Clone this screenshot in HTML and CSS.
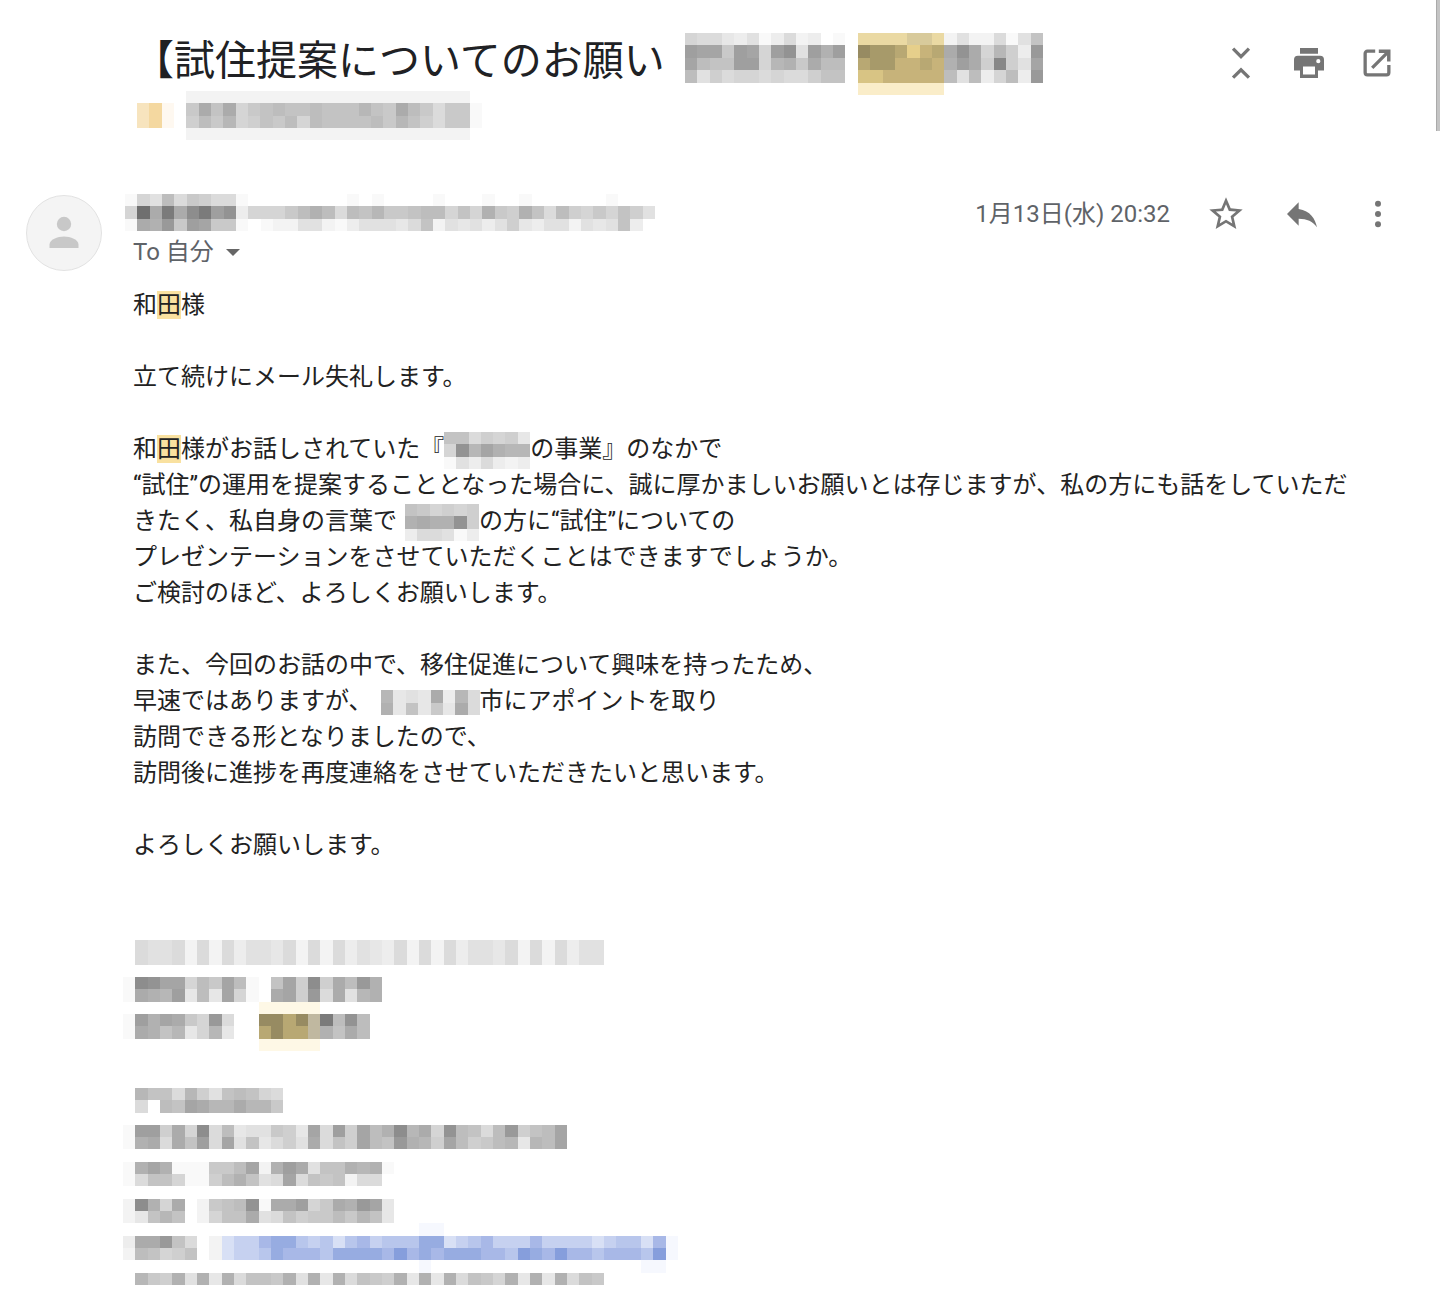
FILE: index.html
```html
<!DOCTYPE html>
<html lang="ja">
<head>
  <meta charset="UTF-8">
  <title>試住提案についてのお願い</title>
  <link rel="stylesheet" href="styles.css">
</head>
<body>

<div class="scroll-thumb"></div>

<header class="thread-header">
  <div class="subject">
    <div class="subject-line">
      <h1>【試住提案についてのお願い</h1>
      <svg class="mosaic" data-rows="hggedfbdgcdab.2222332cfccgbfk qppjqphqsfqnq.9887467osohmidr plkkqqhmnjoll.7886676nqoiuifp lfighhghggikk.5566666lfldhldr ..............1111111"></svg>
    </div>
    <svg class="mosaic label-mosaic" data-rows="....ccccccccccccccccccccccc YZX.jokohjklkklkkkmkjoljgjjb YZX.iljmhikjlhlkkkkljmkigjjb ....ccccccccccccccccccccccc"></svg>
  </div>
  <div class="tools">
    <button type="button" aria-label="すべて折りたたむ">
      <svg viewBox="0 0 24 24"><path class="line" d="M6.700 2.400 12 7.700l5.300-5.300M6.700 21.800l5.300-5.300 5.300 5.300"/></svg>
    </button>
    <button type="button" aria-label="すべて印刷">
      <svg viewBox="0 0 24 24"><path fill-rule="evenodd" d="M6 2h12v3.800H6zM4.600 7.200h14.800A2.600 2.600 0 0 1 22 9.800V17h-4v5H6v-5H2V9.800A2.600 2.600 0 0 1 4.600 7.200zM8 14.400v5.200h8v-5.200zM18.200 9.400a1.400 1.400 0 1 0 0 2.800 1.400 1.400 0 0 0 0-2.800z"/></svg>
    </button>
    <button type="button" aria-label="新しいウィンドウで開く">
      <svg viewBox="0 0 24 24"><path class="line" d="M10.800 4.100H5.600A1.500 1.500 0 0 0 4.100 5.600v12.800a1.500 1.500 0 0 0 1.500 1.500h12.800a1.500 1.500 0 0 0 1.500-1.500v-5M8.800 15.200 18.600 5.400"/><path d="M13.200 3H21v8h-2.300V6.900L17.100 5.300h-3.900z"/></svg>
    </button>
  </div>
</header>

<main class="message">
  <svg class="avatar" viewBox="0 0 76 76">
    <circle class="avatar-bg" cx="38" cy="38" r="37.500"/>
    <circle cx="38" cy="29" r="7.200"/>
    <path d="M23.500 53v-3.500c0-5 8-8 14.500-8s14.500 3 14.500 8V53z"/>
  </svg>

  <div class="content">
    <div class="meta">
      <div class="from">
        <svg class="mosaic sender-mosaic" data-rows="bhflgjiggb........b.b....b...b..b......b... hyowotwqsdhhhjlnlglkmjjkllhkhnjinkglihjhkif bonrjqpjjb.bccffcbdfffegkcfefdfiedffcfefkd"></svg>
        <button type="button" class="to">To 自分 <span class="caret"></span></button>
      </div>
      <div class="actions">
        <time>1月13日(水) 20:32</time>
        <button type="button" aria-label="スター">
          <svg viewBox="0 0 24 24"><path d="M22 9.240l-7.190-.62L12 2 9.190 8.630 2 9.240l5.460 4.730L5.820 21 12 17.270 18.180 21l-1.630-7.030L22 9.240zM12 15.400l-3.760 2.270 1-4.280-3.320-2.880 4.380-.38L12 6.100l1.710 4.040 4.380.38-3.320 2.880 1 4.280L12 15.400z"/></svg>
        </button>
        <button type="button" aria-label="返信">
          <svg viewBox="0 0 24 24"><path d="M10 9V5l-7 7 7 7v-4.100c5 0 8.500 1.600 11 5.100-1-5-4-10-11-11z"/></svg>
        </button>
        <button type="button" aria-label="その他">
          <svg viewBox="0 0 24 24"><circle cx="12" cy="5.800" r="1.800"/><circle cx="12" cy="12" r="1.800"/><circle cx="12" cy="18.200" r="1.800"/></svg>
        </button>
      </div>
    </div>

    <div class="body">
      <p>和<mark>田</mark>様</p>
      <p>立て続けにメール失礼します。</p>
      <p>
        和<mark>田</mark>様がお話しされていた『<svg class="mosaic over" data-rows="kkgihie hsmpnmm bfdgdcd"></svg>の事業』のなかで<br>
        “試住”の運用を提案することとなった場合に、誠に厚かましいお願いとは存じますが、私の方にも話をしていただきたく、私自身の言葉で<svg class="mosaic spaced" data-rows="kjhihi nonnsi dggfbd"></svg>の方に“試住”についての<br>
        プレゼンテーションをさせていただくことはできますでしょうか。<br>
        ご検討のほど、よろしくお願いします。
      </p>
      <p>
        また、今回のお話の中で、移住促進について興味を持ったため、<br>
        早速ではありますが、<svg class="mosaic spaced" data-rows="mefeodmg nekejeog"></svg>市にアポイントを取り<br>
        訪問できる形となりましたので、<br>
        訪問後に進捗を再度連絡をさせていただきたいと思います。
      </p>
      <p>よろしくお願いします。</p>
    </div>

    <svg class="mosaic signature" data-rows="
      .gffgcgcgdffegcgcgdfedgcgcgdffegcgcgdff
      .gffgcgcgdffegcgcgdfedgcgcgdffegcgcgdff
      .
      btspphljplb.kpitiolrn
      bonmqelephb.opirgofmn
      ...........00000
      bqnpojhrg..9979Vwlsl
      bonkmehme..7977Vnkol
      ...........00000
      .
      .
      .
      .mkkgmifklkhg
      .g.lkpommommj
      .
      bqqiohtgleffjiepgqiplntmohslkglriklp
      bnogokqgpfkegifogkiplkrnmiplijlmemlp
      .
      bnpnbbbjjlpcnqofkknmnb
      bgkkhbbilnkfgpgkjkcgg
      .
      ctnho.cjklsbooqhjonrpe
      cekmk.chkkofgkijjljmke
      ........................AA
      doorkg.cBCCEFFDCDBDECDDDFFBCDECCCECCCCBCDDBEA
      clkhik.cBCCDFEEEDFFFFEGEFEFFFEEDGFEGEEDEEEDGA
      ........................A.................AA
      .mjinfnengkkjnfnengkjinenengkjhnenengkj"></svg>
  </div>
</main>

<script src="mosaic.js"></script>
</body>
</html>
```
FILE: styles.css
```css
* {
  box-sizing: border-box;
}
body {
  margin: 0;
  background: #fff;
  color: #222;
  font-family: Roboto, "Noto Sans CJK JP", sans-serif;
}
button {
  display: block;
  padding: 0;
  border: 0;
  background: none;
  color: inherit;
  font: inherit;
  cursor: pointer;
}
svg {
  display: block;
  flex: none;
}
.scroll-thumb {
  position: fixed;
  top: 0;
  right: 0;
  width: 4px;
  height: 131px;
  background: #c4c4c4;
  border-left: 1px solid #aaa;
}

/* subject */
.thread-header {
  display: flex;
  justify-content: space-between;
  padding: 33px 45px 0 133px;
}
.subject-line {
  display: flex;
  align-items: flex-start;
  gap: 20px;
}
h1 {
  margin: 0;
  color: #202124;
  font-size: 41px;
  font-weight: 400;
  line-height: 56px;
  white-space: nowrap;
}
.label-mosaic {
  margin: -4px 0 0 4px;
}
.tools {
  display: flex;
  align-items: flex-start;
  gap: 32px;
  padding-top: 12px;
}
.tools svg {
  width: 36px;
  height: 36px;
  fill: #757575;
}
.tools .line {
  fill: none;
  stroke: #757575;
  stroke-width: 2.2;
}

/* message */
.message {
  display: flex;
  align-items: flex-start;
  gap: 31px;
  padding: 54px 42px 24px 26px;
}
.avatar {
  width: 76px;
  height: 76px;
  margin-top: 1px;
  fill: #c8c8c8;
}
.avatar-bg {
  fill: #f4f4f4;
  stroke: #e2e2e2;
}
.content {
  flex: 1;
  min-width: 0;
}
.meta {
  display: flex;
  justify-content: space-between;
  align-items: flex-start;
  color: #5f6368;
  font-size: 24px;
  line-height: 30px;
}
.sender-mosaic {
  margin-left: -8px;
}
.to {
  display: flex;
  align-items: center;
  gap: 12px;
  margin-top: 6px;
}
.caret {
  border: 7px solid transparent;
  border-top-color: #666;
  border-bottom: 0;
}
.actions {
  display: flex;
  align-items: center;
  gap: 36px;
}
.actions svg {
  width: 40px;
  height: 40px;
  fill: #757575;
}
.body {
  margin-top: 20px;
  padding-right: 30px;
  font-size: 24px;
  line-height: 36px;
}
.body p {
  margin: 0 0 36px;
}
mark {
  display: inline-block;
  background: #f9e1a0;
  color: inherit;
  line-height: 28px;
}

/* pixelated blocks over private text */
.mosaic {
  shape-rendering: crispEdges;
}
.body .mosaic {
  display: inline-block;
  margin: -8px 0;
  vertical-align: middle;
}
.body .over {
  margin-right: 0;
}
.body .spaced {
  margin-left: 8px;
}
.signature {
  margin: 77px 0 0 -10px;
}
```
FILE: mosaic.js
```javascript
// a-z are greys from white to dark, the rest are tints
const CELL = 37 / 3;
const tints = {
  0: "#fef8e6", 1: "#faedc9", 2: "#ead9a3", 3: "#d8ca9b", 4: "#e6cf8b",
  5: "#d8c484", 6: "#c7b37a", 7: "#b8a873", 8: "#a79a6a", 9: "#978b62",
  A: "#f6f8fe", B: "#d8e0f5", C: "#c6d1f0", D: "#b8c6ec", E: "#a8b8e7",
  F: "#97ace1", G: "#869edc",
  V: "#c0b8a0", X: "#fef8f0", Y: "#f7e4be", Z: "#f4d8a0"
};

function cellColor(c) {
  if (tints[c]) return tints[c];
  const v = 255 - (c.charCodeAt(0) - 97) * 6;
  return "rgb(" + v + "," + v + "," + v + ")";
}

document.querySelectorAll(".mosaic").forEach(svg => {
  const rows = svg.dataset.rows.trim().split(/\s+/);
  const cols = Math.max(...rows.map(r => r.length));
  svg.setAttribute("viewBox", "0 0 " + cols + " " + rows.length);
  svg.setAttribute("width", Math.round(cols * CELL));
  svg.setAttribute("height", Math.round(rows.length * CELL));
  svg.setAttribute("preserveAspectRatio", "none");
  svg.setAttribute("aria-hidden", "true");

  let cells = "";
  rows.forEach((row, y) => {
    [...row].forEach((c, x) => {
      if (c === ".") return;
      cells += '<rect x="' + x + '" y="' + y + '" width="1" height="1" fill="' + cellColor(c) + '"/>';
    });
  });
  svg.innerHTML = cells;
});
```
